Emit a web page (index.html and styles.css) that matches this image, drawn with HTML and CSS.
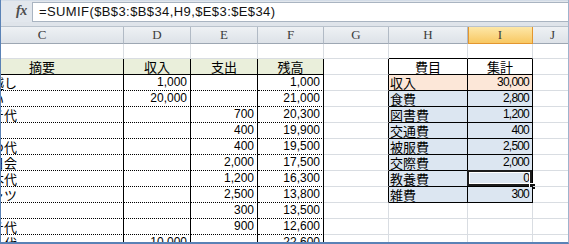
FILE: index.html
```html
<!DOCTYPE html>
<html lang="ja">
<head>
<meta charset="utf-8">
<link rel="stylesheet" href="styles.css">
</head>
<body>
<div class="win">
  <div class="fbar">
    <div class="fx">fx</div>
    <div class="finput">=SUMIF($B$3:$B$34,H9,$E$3:$E$34)</div>
  </div>
  <div class="band"></div>
  <div class="sheet">
    <div class="row colhdr">
      <div class="ch">C</div><div class="ch">D</div><div class="ch">E</div><div class="ch">F</div><div class="ch">G</div><div class="ch">H</div><div class="ch sel">I</div><div class="ch">J</div>
    </div>
    <div class="row r1">
      <div class="c"></div><div class="c"></div><div class="c"></div><div class="c"></div><div class="c"></div><div class="c tt"></div><div class="c tt"></div><div class="c"></div>
    </div>
    <div class="row r16">
      <div class="c lh lv jp ctr">摘要</div><div class="c lh lv jp ctr">収入</div><div class="c lh lv jp ctr">支出</div><div class="c lh lv jp ctr">残高</div><div class="c lv"></div><div class="c rh jp ctr">費目</div><div class="c rh jp ctr">集計</div><div class="c"></div>
    </div>
    <div class="row r16">
      <div class="c ld lv jp">繰り越し</div><div class="c ld lv num">1,000</div><div class="c ld lv num"></div><div class="c ld lv num">1,000</div><div class="c lv"></div><div class="c rd inc jp">収入</div><div class="c rd inc rnum">30,000</div><div class="c"></div>
    </div>
    <div class="row r16">
      <div class="c ld lv jp">小遣い</div><div class="c ld lv num">20,000</div><div class="c ld lv num"></div><div class="c ld lv num">21,000</div><div class="c lv"></div><div class="c rd jp">食費</div><div class="c rd rnum">2,800</div><div class="c"></div>
    </div>
    <div class="row r16">
      <div class="c ld lv jp">ランチ代</div><div class="c ld lv num"></div><div class="c ld lv num">700</div><div class="c ld lv num">20,300</div><div class="c lv"></div><div class="c rd jp">図書費</div><div class="c rd rnum">1,200</div><div class="c"></div>
    </div>
    <div class="row r16">
      <div class="c ld lv jp">バス</div><div class="c ld lv num"></div><div class="c ld lv num">400</div><div class="c ld lv num">19,900</div><div class="c lv"></div><div class="c rd jp">交通費</div><div class="c rd rnum">400</div><div class="c"></div>
    </div>
    <div class="row r16">
      <div class="c ld lv jp">おやつ代</div><div class="c ld lv num"></div><div class="c ld lv num">400</div><div class="c ld lv num">19,500</div><div class="c lv"></div><div class="c rd jp">被服費</div><div class="c rd rnum">2,500</div><div class="c"></div>
    </div>
    <div class="row r16">
      <div class="c ld lv jp">誕生日会</div><div class="c ld lv num"></div><div class="c ld lv num">2,000</div><div class="c ld lv num">17,500</div><div class="c lv"></div><div class="c rd jp">交際費</div><div class="c rd rnum">2,000</div><div class="c"></div>
    </div>
    <div class="row r16">
      <div class="c ld lv jp">文庫本代</div><div class="c ld lv num"></div><div class="c ld lv num">1,200</div><div class="c ld lv num">16,300</div><div class="c lv"></div><div class="c rd jp">教養費</div><div class="c rd rnum active">0</div><div class="c"></div>
    </div>
    <div class="row r16">
      <div class="c ld lv jp">Ｔシャツ</div><div class="c ld lv num"></div><div class="c ld lv num">2,500</div><div class="c ld lv num">13,800</div><div class="c lv"></div><div class="c rd jp">雑費</div><div class="c rd rnum">300</div><div class="c"></div>
    </div>
    <div class="row r16">
      <div class="c ld lv jp">電池</div><div class="c ld lv num"></div><div class="c ld lv num">300</div><div class="c ld lv num">13,500</div><div class="c"></div><div class="c"></div><div class="c"></div><div class="c"></div>
    </div>
    <div class="row r16">
      <div class="c ld lv jp">ランチ代</div><div class="c ld lv num"></div><div class="c ld lv num">900</div><div class="c ld lv num">12,600</div><div class="c"></div><div class="c"></div><div class="c"></div><div class="c"></div>
    </div>
    <div class="row r16">
      <div class="c ld lv jp">バイト代</div><div class="c ld lv num">10,000</div><div class="c ld lv num"></div><div class="c ld lv num">22,600</div><div class="c"></div><div class="c"></div><div class="c"></div><div class="c"></div>
    </div>
  </div>
</div>
</body>
</html>
```

FILE: styles.css
```css
html, body {
  margin: 0;
  padding: 0;
  background: #ffffff;
}

.win {
  position: relative;
  width: 569px;
  height: 244px;
  box-sizing: border-box;
  border-left: 1px solid #5a82b6;
  border-right: 1px solid #9fb3cc;
  border-bottom: 2px solid #5a82b6;
  overflow: hidden;
  background: #ffffff;
}

.fbar {
  display: flex;
  height: 22px;
  background: #e2e7ed;
  box-sizing: border-box;
  border-top: 1px solid #d3dce7;
}

.fx {
  width: 31px;
  flex: none;
  box-sizing: border-box;
  padding-left: 15px;
  font-family: "Liberation Serif", serif;
  font-style: italic;
  font-weight: bold;
  font-size: 14px;
  line-height: 19px;
  color: #4d4d4d;
  letter-spacing: -0.5px;
}

.finput {
  flex: 1;
  margin-top: 1px;
  background: #ffffff;
  border-top: 1px solid #a9b4c1;
  border-left: 1px solid #a9b4c1;
  border-bottom: 1px solid #a9b4c1;
  box-sizing: border-box;
  padding-left: 6px;
  font-family: "Liberation Sans", sans-serif;
  font-size: 13px;
  letter-spacing: 0.4px;
  line-height: 18px;
  color: #111;
  white-space: nowrap;
}

.band {
  height: 4px;
  background: #dfe4ea;
}

.sheet {
  margin-left: -40px;
}

.row {
  display: grid;
  grid-template-columns: 163px 67px 67px 66px 65px 79px 65px 40px;
}

.colhdr {
  height: 18px;
  border-top: 1px solid #b9c2cc;
  box-sizing: border-box;
}

.ch {
  box-sizing: border-box;
  height: 17px;
  background: linear-gradient(#eef1f4, #dde2e8);
  border-right: 1px solid #b1bac5;
  border-bottom: 1px solid #9da7b3;
  text-align: center;
  font-family: "Liberation Serif", serif;
  font-size: 13px;
  line-height: 16px;
  color: #3c3c3c;
}

.ch.sel {
  background: linear-gradient(#fde7a8, #f8c862);
  border-right: 1px solid #e3962f;
  border-bottom: 1px solid #e3962f;
  box-shadow: inset 1px 0 0 #e3962f;
}

.r1 {
  height: 15px;
}

.r16 {
  height: 16px;
}

.c {
  position: relative;
  box-sizing: border-box;
  border-right: 1px solid #d9dde2;
  border-bottom: 1px solid #d9dde2;
  white-space: nowrap;
  line-height: 15px;
  color: #000;
}

.tt {
  border-bottom-color: #000;
}

.lv {
  border-right-color: #000;
}

.lh {
  background: #eaefdb;
  border-bottom: 1px solid #000;
}

.ld {
  border-bottom: 1px dotted #000;
}

.rh {
  background: #ffffff;
  border-right-color: #000;
  border-bottom-color: #000;
}

.rd {
  background: #dce6f1;
  border-right-color: #000;
  border-bottom-color: #000;
}

.rd.inc {
  background: #fce7d8;
}

.jp {
  font-family: "Noto Sans CJK JP", sans-serif;
  font-size: 13px;
  padding-left: 1px;
}

.ld.jp {
  padding-left: 4px;
  overflow: hidden;
}

.ctr {
  text-align: center;
  padding-left: 0;
}

.num {
  text-align: right;
  padding-right: 3px;
  font-family: "Liberation Sans", sans-serif;
  font-size: 12px;
}

.rnum {
  text-align: right;
  padding-right: 3px;
  font-family: "Liberation Sans", sans-serif;
  font-size: 12px;
  letter-spacing: -0.8px;
}

.active::before {
  content: "";
  position: absolute;
  top: -1px;
  left: -1px;
  right: 0;
  bottom: 0;
  border: 2px solid #1c1c1c;
  box-shadow: inset 0 0 0 1px #ffffff;
}

.active::after {
  content: "";
  position: absolute;
  right: -3px;
  bottom: -3px;
  width: 5px;
  height: 5px;
  background: #111;
  border: 1px solid #fff;
  border-right: none;
  border-bottom: none;
}
```
